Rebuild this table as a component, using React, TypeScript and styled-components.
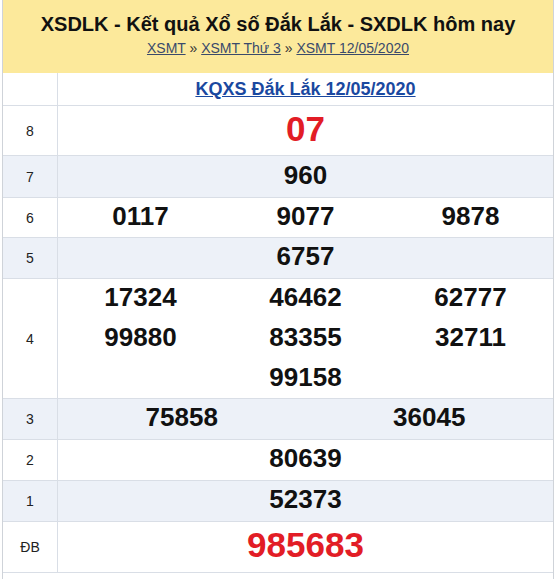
import React from "react";
import styled, { createGlobalStyle } from "styled-components";

const Global = createGlobalStyle`
  html, body { margin: 0; padding: 0; background: #fff; }
  body { font-family: "Liberation Sans", Arial, sans-serif; }
`;

const Wrapper = styled.div`
  margin-left: 2px;
  width: 552px;
  box-sizing: border-box;
  border-left: 1px solid #cfd3d9;
  border-right: 1px solid #cfd3d9;
`;

const Header = styled.div`
  background: #fce99b;
  height: 73px;
  box-sizing: border-box;
  padding-top: 12px;
  text-align: center;
`;

const Title = styled.h1`
  margin: 0;
  font-size: 20px;
  line-height: 24px;
  font-weight: bold;
  color: #111;
`;

const Crumbs = styled.div`
  margin-top: 3px;
  font-size: 14px;
  line-height: 18px;
  color: #333;
`;

const Crumb = styled.a`
  color: #3a4a6b;
  text-decoration: underline;
`;

const Row = styled.div<{ $h: number; $alt?: boolean }>`
  display: grid;
  grid-template-columns: 55px 1fr;
  min-height: ${(p) => p.$h}px;
  background: ${(p) => (p.$alt ? "#edf1f8" : "#fff")};
  border-bottom: 1px solid #d9dee6;
`;

const Label = styled.div`
  border-right: 1px solid #d9dee6;
  display: flex;
  align-items: center;
  justify-content: center;
  font-size: 14px;
  color: #222;
`;

const Values = styled.div<{ $cols: number }>`
  display: grid;
  grid-template-columns: repeat(${(p) => p.$cols}, 1fr);
  align-items: center;
  align-content: center;
  margin-top: -4px;
`;

const Num = styled.div<{ $red?: boolean; $span?: number }>`
  text-align: center;
  font-weight: bold;
  font-size: ${(p) => (p.$red ? 35 : 26)}px;
  line-height: ${(p) => (p.$red ? 48 : 40)}px;
  color: ${(p) => (p.$red ? "#e21d26" : "#111")};
  ${(p) => (p.$span ? `grid-column: ${p.$span};` : "")}
`;

const TableTitle = styled.a`
  display: block;
  text-align: center;
  font-weight: bold;
  font-size: 18px;
  line-height: 32px;
  color: #1a48a0;
  text-decoration: underline;
`;

const Tail = styled.div`
  height: 6px;
`;

type Prize = { label: string; nums: string[]; cols: number; h: number; red?: boolean; alt?: boolean };

const prizes: Prize[] = [
  { label: "8", nums: ["07"], cols: 1, h: 49, red: true },
  { label: "7", nums: ["960"], cols: 1, h: 41, alt: true },
  { label: "6", nums: ["0117", "9077", "9878"], cols: 3, h: 39 },
  { label: "5", nums: ["6757"], cols: 1, h: 40, alt: true },
  { label: "4", nums: ["17324", "46462", "62777", "99880", "83355", "32711", "99158"], cols: 3, h: 119 },
  { label: "3", nums: ["75858", "36045"], cols: 2, h: 40, alt: true },
  { label: "2", nums: ["80639"], cols: 1, h: 40 },
  { label: "1", nums: ["52373"], cols: 1, h: 40, alt: true },
  { label: "ĐB", nums: ["985683"], cols: 1, h: 50, red: true },
];

export default function App() {
  return (
    <>
      <Global />
      <Wrapper>
        <Header>
          <Title>XSDLK - Kết quả Xổ số Đắk Lắk - SXDLK hôm nay</Title>
          <Crumbs>
            <Crumb>XSMT</Crumb> » <Crumb>XSMT Thứ 3</Crumb> » <Crumb>XSMT 12/05/2020</Crumb>
          </Crumbs>
        </Header>
        <Row $h={32}>
          <Label />
          <TableTitle>KQXS Đắk Lắk 12/05/2020</TableTitle>
        </Row>
        {prizes.map((p) => (
          <Row key={p.label} $h={p.h} $alt={p.alt}>
            <Label>{p.label}</Label>
            <Values $cols={p.cols}>
              {p.nums.map((n, i) => (
                <Num key={i} $red={p.red} $span={p.label === "4" && i === 6 ? 2 : undefined}>
                  {n}
                </Num>
              ))}
            </Values>
          </Row>
        ))}
        <Tail />
      </Wrapper>
    </>
  );
}
